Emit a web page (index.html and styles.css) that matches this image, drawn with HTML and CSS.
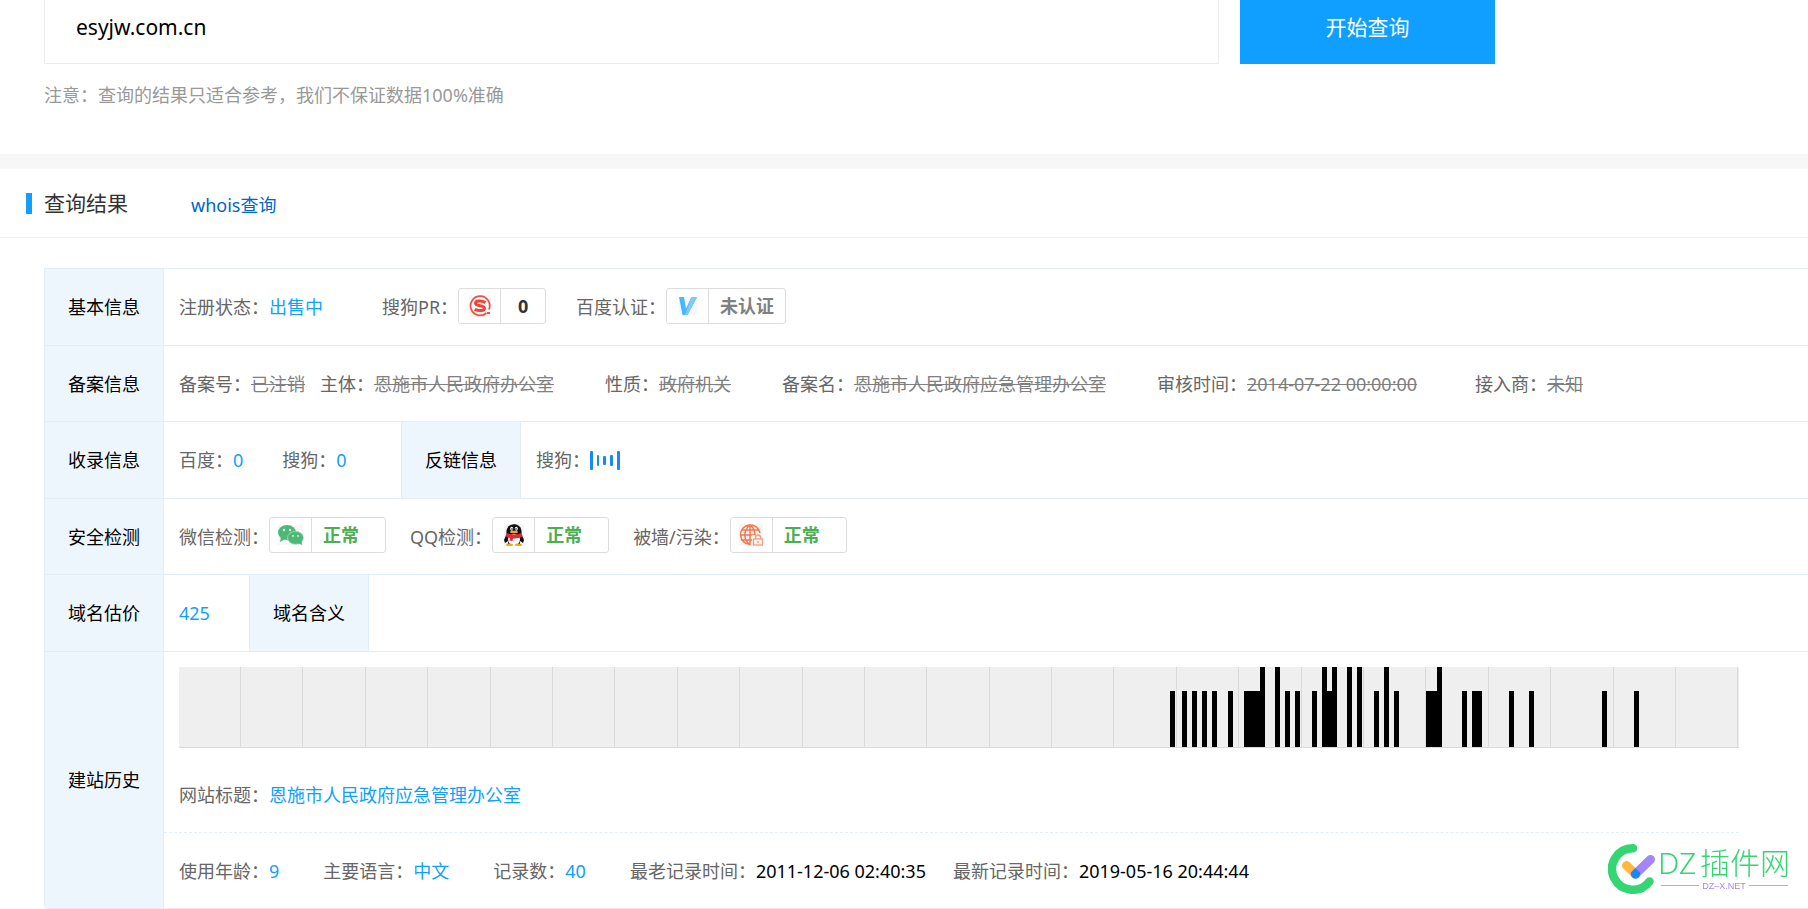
FILE: index.html
```html
<!DOCTYPE html>
<html lang="zh-CN">
<head>
<meta charset="utf-8">
<meta name="viewport" content="width=device-width, initial-scale=1">
<title>查询结果</title>
<link rel="stylesheet" href="styles.css">
</head>
<body>
<section class="search">
  <form class="search-form">
    <input class="search-input" type="text" value="esyjw.com.cn" aria-label="域名">
    <button class="search-button" type="button">开始查询</button>
  </form>
  <p class="notice">注意：查询的结果只适合参考，我们不保证数据100%准确</p>
</section>

<main class="result">
  <header class="result-head">
    <h2 class="result-title">查询结果</h2>
    <a class="whois" href="#">whois查询</a>
  </header>

  <table class="info">
    <colgroup>
      <col class="col-head"><col class="col-a"><col class="col-head-inner"><col class="col-b"><col class="col-head-inner"><col>
    </colgroup>
    <tbody>
    <tr>
      <th scope="row">基本信息</th>
      <td colspan="5">
        <div class="line">
          <span class="item gap-59">注册状态：<a class="link" href="#">出售中</a></span>
          <span class="item gap-30">搜狗PR：<span class="badge"><span class="badge-icon">
            <svg width="22" height="22" viewBox="0 0 22 22" aria-hidden="true"><rect width="22" height="22" fill="#f7f5f5"/><path d="M17.500 18A9.600 9.600 0 1 1 20 14.500" fill="none" stroke="#ef5244" stroke-width="1.700"/><path d="M18 18h3" stroke="#ef5244" stroke-width="2"/><path d="M16.500 7.500C12.500 5.200 6.500 5.300 6.500 8.300c0 3.200 9 1.800 9 5 0 3-5.800 2.800-9.800 1" fill="none" stroke="#ef4335" stroke-width="3"/></svg>
          </span><b class="badge-text badge-count">0</b></span></span>
          <span class="item">百度认证：<span class="badge"><span class="badge-icon">
            <svg width="18" height="18" viewBox="0 0 18 18" aria-hidden="true"><rect width="18" height="18" fill="#f5f7fa"/><path d="M0 0h5l2 11.500L12.500 0H18L8.500 18h-5z" fill="#48b7fb"/><path d="M12.500 0H18L8.500 18H6z" fill="#7ccbfa"/></svg>
          </span><b class="badge-text badge-muted">未认证</b></span></span>
        </div>
      </td>
    </tr>
    <tr>
      <th scope="row">备案信息</th>
      <td colspan="5">
        <div class="line">
          <span class="item gap-15">备案号：<s>已注销</s></span>
          <span class="item gap-51">主体：<s>恩施市人民政府办公室</s></span>
          <span class="item gap-51">性质：<s>政府机关</s></span>
          <span class="item gap-51">备案名：<s>恩施市人民政府应急管理办公室</s></span>
          <span class="item gap-51">审核时间：<s class="date">2014-07-22 00:00:00</s></span>
          <span class="item">接入商：<s>未知</s></span>
        </div>
      </td>
    </tr>
    <tr>
      <th scope="row">收录信息</th>
      <td colspan="3">
        <div class="line">
          <span class="item gap-39">百度：<a class="link" href="#">0</a></span>
          <span class="item">搜狗：<a class="link" href="#">0</a></span>
        </div>
      </td>
      <th class="inner" scope="row">反链信息</th>
      <td>
        <div class="line">
          <span class="item">搜狗：<svg width="30" height="20" viewBox="0 0 30 20" role="img" aria-label="加载中" fill="#1989fa"><rect x="0" y="1" width="3" height="19" rx="1"/><rect x="7" y="5" width="2" height="11" rx="1"/><rect x="13" y="6" width="3" height="9" rx="1"/><rect x="20" y="5" width="3" height="11" rx="1"/><rect x="27" y="1" width="3" height="19" rx="1"/></svg></span>
        </div>
      </td>
    </tr>
    <tr>
      <th scope="row">安全检测</th>
      <td colspan="5">
        <div class="line">
          <span class="item gap-24">微信检测：<span class="badge"><span class="badge-icon">
            <svg width="26" height="20" viewBox="0 0 26 20" aria-hidden="true"><rect width="25" height="20" fill="#f6f7f6"/><ellipse cx="9" cy="7.500" rx="9" ry="7.500" fill="#4eb877"/><path d="M3 12l-1 5 5-3z" fill="#4eb877"/><ellipse cx="17.500" cy="12.800" rx="8" ry="6.500" fill="#4eb877" stroke="#b5dfc5" stroke-width=".7"/><path d="M20 18l4 2-.5-4z" fill="#4eb877"/><g fill="#d9f0e1"><circle cx="6" cy="5" r="1.200"/><circle cx="12" cy="5" r="1.200"/><circle cx="15" cy="11" r="1"/><circle cx="20" cy="11" r="1"/></g></svg>
          </span><b class="badge-text badge-ok">正常</b></span></span>
          <span class="item gap-24">QQ检测：<span class="badge"><span class="badge-icon">
            <svg width="20" height="22" viewBox="0 0 20 22" aria-hidden="true"><rect width="20" height="22" fill="#f4f4f4"/><path d="M3 9L0 16l1 3 3-2v3h12v-3l3 2 1-3-3-7z" fill="#111"/><ellipse cx="10" cy="15.500" rx="6" ry="5.500" fill="#fff"/><path d="M2.500 9.500C1-3 19-3 17.500 9.500z" fill="#111"/><ellipse cx="7.700" cy="4.800" rx="1.500" ry="2" fill="#fff"/><ellipse cx="12.300" cy="4.800" rx="1.500" ry="2" fill="#fff"/><circle cx="8" cy="5" r=".8"/><circle cx="12" cy="5" r=".8"/><ellipse cx="10" cy="8" rx="4" ry="1.200" fill="#f5a31a"/><path d="M2.500 9q7.500 3 15 0l1 3.500q-4 2.500-9.500 2l-.5 2.500-3-.5.5-2.500q-2-.5-4-1.500z" fill="#e02a33"/><ellipse cx="5.500" cy="20.700" rx="3.500" ry="1.300" fill="#f0a51e"/><ellipse cx="14.500" cy="20.700" rx="3.500" ry="1.300" fill="#f0a51e"/></svg>
          </span><b class="badge-text badge-ok">正常</b></span></span>
          <span class="item">被墙/污染：<span class="badge"><span class="badge-icon">
            <svg width="24" height="22" viewBox="0 0 24 22" aria-hidden="true"><rect width="24" height="22" fill="#f8f6f5"/><g fill="none" stroke="#f5774e" stroke-width="1.500"><path d="M11 20.500A9.800 9.800 0 1 1 21 9M11 1v20M11 1C4 7 4 15 11 21M11 1c4 3 5 6 5 10M2 6h18M1 11h15M2 16h11"/></g><rect x="13" y="11" width="11" height="11" fill="#f8f6f5"/><rect x="14.500" y="15" width="9" height="6" fill="none" stroke="#f79b80" stroke-width="1.300"/><path d="M16.500 15v-1.500a2.500 2.500 0 0 1 5 0V15M19 17v2" fill="none" stroke="#f79b80" stroke-width="1.300"/></svg>
          </span><b class="badge-text badge-ok">正常</b></span></span>
        </div>
      </td>
    </tr>
    <tr>
      <th scope="row">域名估价</th>
      <td><div class="line"><a class="link" href="#">425</a></div></td>
      <th class="inner" scope="row">域名含义</th>
      <td colspan="3"></td>
    </tr>
    <tr>
      <th scope="row">建站历史</th>
      <td class="history" colspan="5">
        <svg class="chart" viewBox="0 0 1560 81" preserveAspectRatio="none" role="img" aria-label="建站历史记录" shape-rendering="crispEdges">
          <rect width="1560" height="80" fill="#efefef"/>
          <path fill="#dadada" d="M0 80h1560v1H0zM61 0h1v80h-1zM123 0h1v80h-1zM186 0h1v80h-1zM248 0h1v80h-1zM311 0h1v80h-1zM373 0h1v80h-1zM435 0h1v80h-1zM498 0h1v80h-1zM560 0h1v80h-1zM623 0h1v80h-1zM685 0h1v80h-1zM747 0h1v80h-1zM810 0h1v80h-1zM872 0h1v80h-1zM934 0h1v80h-1zM997 0h1v80h-1zM1059 0h1v80h-1zM1122 0h1v80h-1zM1184 0h1v80h-1zM1246 0h1v80h-1zM1309 0h1v80h-1zM1371 0h1v80h-1zM1434 0h1v80h-1zM1496 0h1v80h-1zM1558 0h1v80h-1z"/>
          <path d="M991 24h5v56h-5zM1003 24h5v56h-5zM1013 24h5v56h-5zM1023 24h5v56h-5zM1033 24h5v56h-5zM1049 24h5v56h-5zM1065 24h16v56h-16zM1106 24h5v56h-5zM1116 24h5v56h-5zM1133 24h5v56h-5zM1148 24h5v56h-5zM1195 24h5v56h-5zM1215 24h5v56h-5zM1247 24h11v56h-11zM1283 24h5v56h-5zM1293 24h10v56h-10zM1330 24h5v56h-5zM1350 24h5v56h-5zM1423 24h5v56h-5zM1455 24h5v56h-5z"/>
          <path d="M1081 0h5v80h-5zM1096 0h5v80h-5zM1143 0h5v80h-5zM1153 0h5v80h-5zM1168 0h5v80h-5zM1178 0h5v80h-5zM1205 0h5v80h-5zM1258 0h5v80h-5z"/>
        </svg>
        <div class="line site-title">
          <span class="item">网站标题：<a class="link" href="#">恩施市人民政府应急管理办公室</a></span>
        </div>
        <div class="line site-stats">
          <span class="item gap-44">使用年龄：<span class="link">9</span></span>
          <span class="item gap-44">主要语言：<span class="link">中文</span></span>
          <span class="item gap-44">记录数：<span class="link">40</span></span>
          <span class="item gap-20">最老记录时间：<span class="date dark">2011-12-06 02:40:35</span></span>
          <span class="item">最新记录时间：<span class="date dark">2019-05-16 20:44:44</span></span>
        </div>
      </td>
    </tr>
    </tbody>
  </table>
</main>

<svg class="watermark" width="190" height="70" viewBox="0 -12 190 70" role="img" aria-label="DZ插件网">
  <path d="M25 4.200A20.800 20.800 0 1 0 41.500 37.500" fill="none" stroke="#33d673" stroke-width="8.500" stroke-linecap="round"/>
  <path d="M18.500 21.500l9 8.500" stroke="#ffb83d" stroke-width="9" stroke-linecap="round"/>
  <path d="M42.500 15.500l-15 14.500" stroke="#a585fe" stroke-width="9" stroke-linecap="round"/>
  <path d="M27.500 24.200l4.500 4.300a4.700 4.700 0 1 1-9 0z" fill="#1687ff"/>
  <text class="mark-name" x="50" y="30">DZ<tspan x="92">插件网</tspan></text>
  <path d="M53 41.500h38M141 41.500h39" stroke="#b9a2fb"/>
  <text class="mark-site" x="116" y="45" text-anchor="middle">DZ–X.NET</text>
</svg>
</body>
</html>
```
FILE: styles.css
```css
* {
  box-sizing: border-box;
}

body {
  margin: 0;
  background: #fff;
  color: #666;
  font: 18px/24px "Noto Sans", "Noto Sans CJK SC", sans-serif;
}

a {
  text-decoration: none;
}

.search {
  height: 154px;
}

.search-form {
  display: flex;
  gap: 21px;
  max-width: 1495px;
  padding-left: 44px;
}

.search-input,
.search-button {
  height: 64px;
  font-family: inherit;
  font-size: 21px;
}

.search-input {
  flex: 1;
  min-width: 0;
  padding: 0 31px 9px;
  border: 1px solid #ececec;
  border-top: 0;
  color: #000;
  outline: 0;
}

.search-button {
  width: 255px;
  padding: 0 0 13px;
  border: 0;
  background: #119fff;
  color: #fff;
}

.notice {
  margin: 19px 44px 0;
  color: #999;
}

.result {
  border-top: 15px solid #f7f7f7;
}

.result-head {
  display: flex;
  align-items: center;
  gap: 63px;
  height: 69px;
  padding-left: 26px;
  border-bottom: 1px solid #eee;
}

.result-title {
  display: flex;
  align-items: center;
  gap: 12px;
  margin: 0;
  color: #333;
  font-size: 21px;
  font-weight: 400;
}

.result-title::before {
  width: 6px;
  height: 21px;
  background: #119fff;
  content: "";
}

.whois {
  padding-top: 3px;
  color: #06c;
}

.info {
  width: calc(100% - 44px);
  margin: 30px 0 0 44px;
  table-layout: fixed;
  border: 1px solid #e1edf7;
  border-right: 0;
  border-bottom: 0;
  border-radius: 0 0 0 4px;
  border-spacing: 0;
}

.col-head { width: 119px; }
.col-a { width: 85px; }
.col-head-inner { width: 120px; }
.col-b { width: 32px; }

.info tr {
  height: 77px;
}

.info tr:nth-child(even) {
  height: 76px;
}

.info th,
.info td {
  padding: 0;
  border-bottom: 1px solid #e1edf7;
}

.info th {
  border-right: 1px solid #e1edf7;
  background: #eef6fd;
  color: #000;
  font-weight: 400;
}

.info th.inner {
  border-left: 1px solid #e1edf7;
}

.info tr:last-child th {
  border-bottom-left-radius: 4px;
}

.line {
  display: flex;
  align-items: center;
  padding-left: 15px;
  white-space: nowrap;
}

.item {
  display: flex;
  align-items: center;
}

.gap-15 { margin-right: 15px; }
.gap-20 { margin-right: 20px; }
.gap-24 { margin-right: 24px; }
.gap-30 { margin-right: 30px; }
.gap-39 { margin-right: 39px; }
.gap-44 { margin-right: 44px; }
.gap-51 { margin-right: 51px; }
.gap-59 { margin-right: 59px; }

.link {
  color: #119fff;
}

s {
  color: #808080;
}

.date {
  min-width: 177px;
}

.dark {
  color: #000;
}

.badge {
  display: flex;
  height: 36px;
  margin-bottom: 3px;
  border: 1px solid #ddd;
  border-radius: 3px;
}

.badge-icon {
  display: flex;
  align-items: center;
  justify-content: center;
  width: 42px;
  border-right: 1px solid #ddd;
}

.badge-text {
  padding: 5px 11px;
}

.badge-count {
  width: 44px;
  color: #333;
  text-align: center;
}

.badge-muted {
  color: #808080;
}

.badge-ok {
  width: 73px;
  color: #4caf50;
}

.info .history {
  vertical-align: top;
}

.chart {
  display: block;
  width: calc(100% - 84px);
  height: 81px;
  margin: 15px 69px 0 15px;
}

.site-title {
  height: 85px;
  margin-right: 69px;
  padding-top: 9px;
  border-bottom: 1px dashed #e1edf7;
}

.site-stats {
  height: 75px;
}

.watermark {
  position: fixed;
  right: 10px;
  bottom: 7px;
}

.mark-name {
  fill: #33d673;
  font: 30px "Noto Sans", "Noto Sans CJK SC", sans-serif;
  font-weight: 300;
}

.mark-site {
  fill: #a585fe;
  font: 9px "Liberation Sans", sans-serif;
}
```
